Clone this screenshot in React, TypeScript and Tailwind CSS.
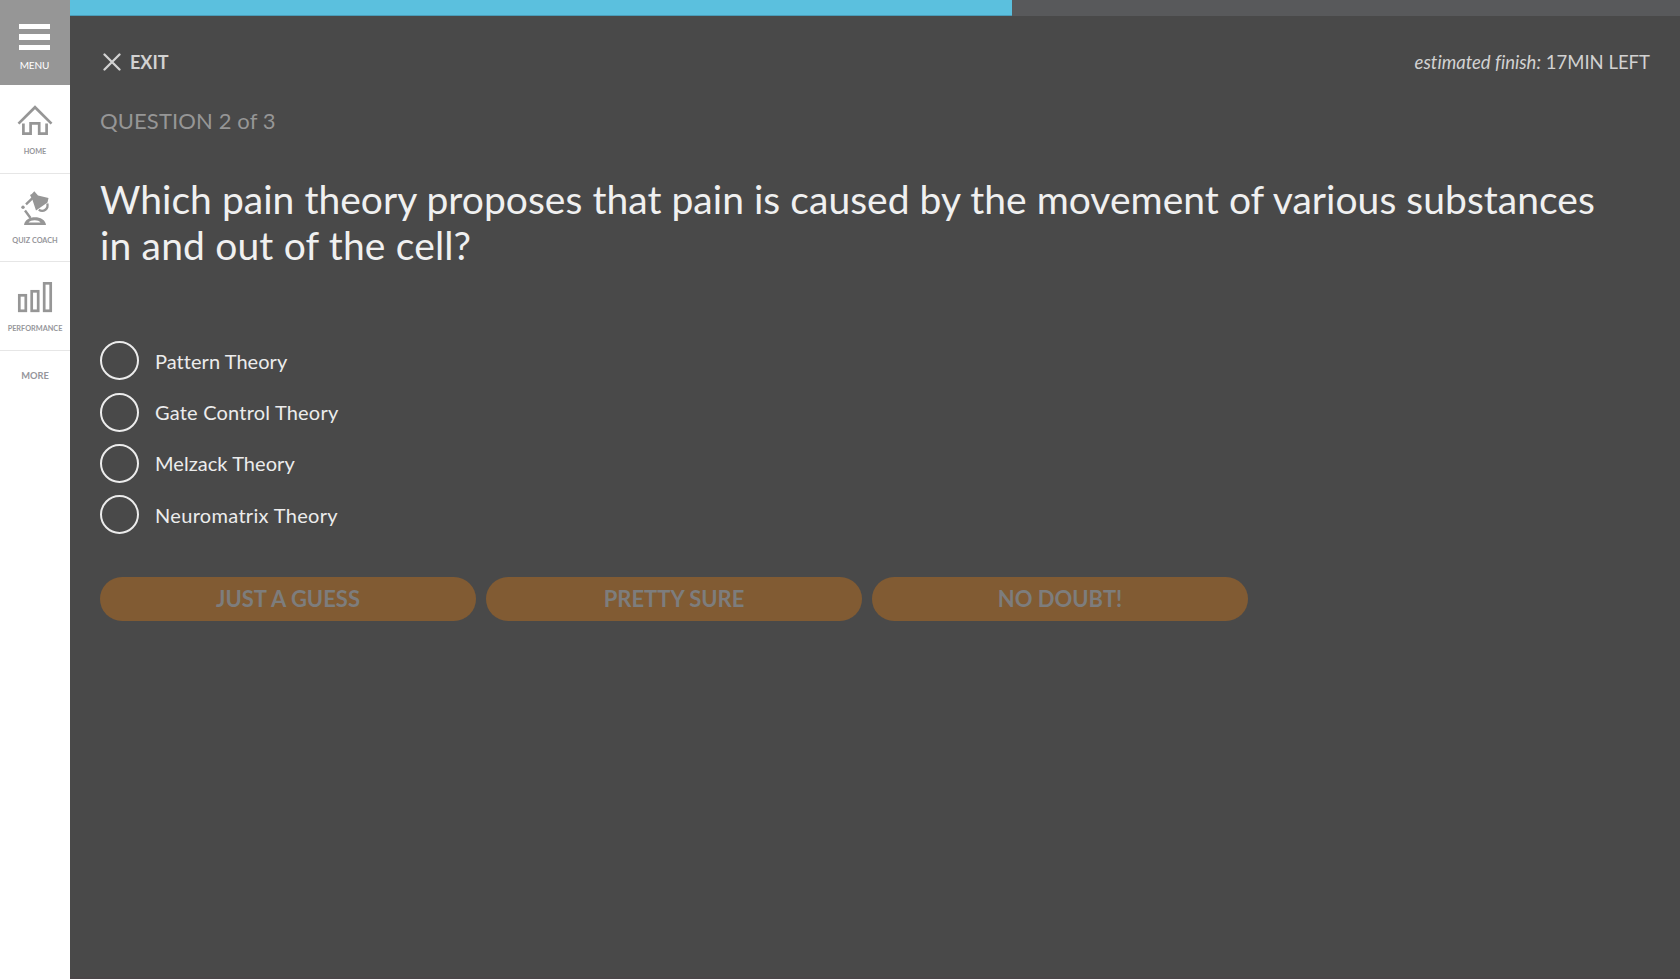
import type { ReactNode } from "react";

function HomeIcon() {
  return (
    <svg width="36" height="32" viewBox="0 0 36 32" fill="none" stroke="#969696" strokeWidth="2.7">
      <path d="M1.500 18.600 18 2.200 34.500 18.600" />
      <path d="M6.400 18.500V28.600H13.600V18.400H22.200V28.600H29.600V18.500" />
    </svg>
  );
}

function LampIcon() {
  return (
    <svg width="30" height="36" viewBox="0 0 30 36" fill="none" stroke="#969696">
      <path d="M10 5 11.800 4 14.300 1.200 18 5.500 28.500 8 27.500 12.500 16 20.500 12.500 10Z" fill="#969696" stroke="none" />
      <path d="M6 14.300 12.500 8.200M5 20.500 10.500 28" strokeWidth="2.400" />
      <circle cx="3" cy="17.200" r="1.700" fill="#969696" stroke="none" />
      <path d="M27.300 13.500C28.800 18.800 23.500 22.800 18.800 19.800" strokeWidth="2.300" />
      <path d="M4 35C5 24.500 25 24.500 26 35Z" fill="#969696" stroke="none" />
      <path d="M8.500 32.600C11 29.600 18.500 29.600 20.500 32.600Z" fill="#fff" stroke="none" />
    </svg>
  );
}

function BarsIcon() {
  return (
    <svg width="36" height="32" viewBox="0 0 36 32" fill="none" stroke="#969696" strokeWidth="2.700">
      <rect x="2.300" y="13.300" width="6.500" height="15.500" />
      <rect x="14.700" y="9.300" width="6.500" height="19.500" />
      <rect x="27.200" y="1.300" width="6.500" height="27.500" />
    </svg>
  );
}

function NavItem({ icon, label, spacing }: { icon: ReactNode; label: string; spacing: string }) {
  return (
    <a className={`flex w-full flex-col items-center border-b border-[#e6e6e6] ${spacing}`}>
      <span className="flex h-9 items-end">{icon}</span>
      <span className="mt-[10px] text-[7.300px] leading-[10px] font-bold whitespace-nowrap text-[#96969b]">{label}</span>
    </a>
  );
}

const options = [
  { text: "Pattern Theory", tracking: "tracking-[0.050px]" },
  { text: "Gate Control Theory", tracking: "tracking-[0.200px]" },
  { text: "Melzack Theory", tracking: "tracking-[0.050px]" },
  { text: "Neuromatrix Theory", tracking: "tracking-[0.320px]" },
];
const answers = ["JUST A GUESS", "PRETTY SURE", "NO DOUBT!"];

export default function App() {
  return (
    <div className="flex h-[979px] w-full overflow-hidden bg-[#494949] font-['Lato',sans-serif] [font-variant-ligatures:none]">
      <nav className="flex w-[70px] shrink-0 flex-col bg-white">
        <a className="flex h-[85px] flex-col items-center bg-[#969696] pt-6 pr-px">
          <span className="flex w-[31px] flex-col gap-[5px]">
            <span className="h-[5px] bg-white" />
            <span className="h-[6px] bg-white" />
            <span className="h-[5px] bg-white" />
          </span>
          <span className="mt-[9px] text-[10px] leading-3 tracking-[-0.100px] text-white">MENU</span>
        </a>
        <NavItem icon={<HomeIcon />} label="HOME" spacing="h-[89px] pt-[15.500px]" />
        <NavItem icon={<LampIcon />} label="QUIZ COACH" spacing="h-[88px] pt-[16px]" />
        <NavItem icon={<BarsIcon />} label="PERFORMANCE" spacing="h-[89px] pt-[16px]" />
        <a className="pt-[18px] text-center text-[9.300px] leading-[14px] font-bold text-[#96969b]">MORE</a>
      </nav>

      <main className="flex min-w-0 grow flex-col border-b-2 border-[#4a4648]">
        <div className="h-4 shrink-0 bg-[#58595b]">
          <div className="h-full w-[942px] border-b border-[#4b9db9] bg-[#5bc0de]" />
        </div>

        <div className="flex flex-col px-[30px]">
          <header className="mt-[34px] flex h-6 items-center justify-between text-[#d2d2d2]">
            <button className="flex items-center pl-[3px] text-[18px] leading-6 font-bold">
              <svg width="18" height="18" viewBox="0 0 18 18" stroke="#d2d2d2" strokeWidth="2.300" strokeLinecap="round">
                <path d="M1.500 1.500 16.500 16.500M16.500 1.500 1.500 16.500" />
              </svg>
              <span className="ml-[9px]">EXIT</span>
            </button>
            <p className="text-[18.500px] leading-6">
              <em>estimated finish:</em> 17MIN LEFT
            </p>
          </header>

          <p className="mt-[33px] text-[22px] leading-7 tracking-[0.120px] text-[#969696]">QUESTION 2 of 3</p>

          <h1 className="mt-[41px] w-[1520px] text-[39px] leading-[46px] tracking-[0.035px] text-[#f0f0f0]">
            Which pain theory proposes that pain is caused by the movement of various substances
            <br />
            <span className="tracking-[0.160px]">in and out of the cell?</span>
          </h1>

          <div className="mt-[73.400px] flex flex-col gap-[12.300px]">
            {options.map((o) => (
              <label key={o.text} className="flex h-[39px] items-center gap-[16px] text-[20px] leading-6 text-[#ececec]">
                <span className="size-[39px] rounded-full border-2 border-[#ececec]" />
                <span className={o.tracking}>{o.text}</span>
              </label>
            ))}
          </div>

          <div className="mt-[42.700px] flex gap-[10px]">
            {answers.map((a) => (
              <button key={a} className="h-11 w-[376px] rounded-full bg-[#815b33] text-[22px] leading-7 font-bold text-[#7d7d7d]">
                {a}
              </button>
            ))}
          </div>
        </div>
      </main>
    </div>
  );
}
